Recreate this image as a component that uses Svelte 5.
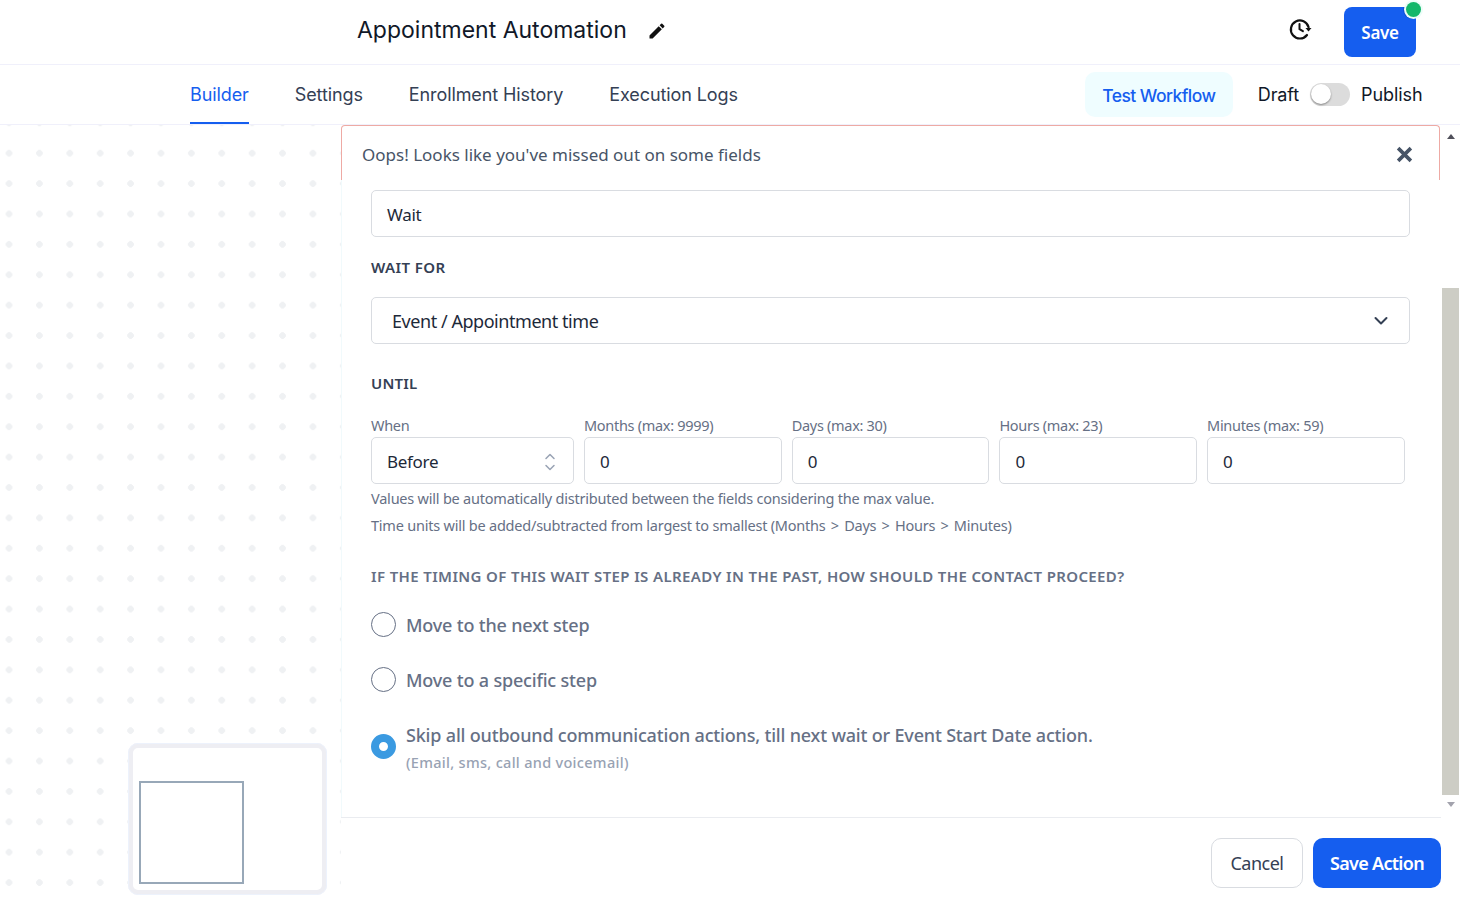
<script lang="ts">
	const units = [
		{ label: 'Months (max: 9999)', value: '0' },
		{ label: 'Days (max: 30)', value: '0' },
		{ label: 'Hours (max: 23)', value: '0' },
		{ label: 'Minutes (max: 59)', value: '0' }
	];
	const tabs = ['Builder', 'Settings', 'Enrollment History', 'Execution Logs'];
</script>

<div class="page">
	<header class="top">
		<h1 class="title">Appointment Automation</h1>
		<svg class="pencil" viewBox="0 0 24 24" width="20" height="20" aria-hidden="true">
			<path fill="#111" d="M3 17.25V21h3.75L17.81 9.94l-3.75-3.75L3 17.25zM20.71 7.04a1 1 0 0 0 0-1.41l-2.34-2.34a1 1 0 0 0-1.41 0l-1.83 1.83 3.75 3.75 1.83-1.83z" />
		</svg>
		<svg class="history" viewBox="0 0 24 24" width="24" height="24" aria-hidden="true">
			<path fill="none" stroke="#111" stroke-width="2.2" stroke-linecap="round" d="M20.6 10.2A9 9 0 1 0 19 18" />
			<path fill="none" stroke="#111" stroke-width="2" stroke-linecap="round" stroke-linejoin="round" d="M11.5 7v5.2l3.4 2" />
			<path fill="#111" d="M17.5 11h6l-3 3.6z" />
		</svg>
		<div class="save-wrap">
			<button class="btn-primary save">Save</button>
			<span class="ping"></span>
			<span class="dot"></span>
		</div>
	</header>

	<nav class="tabs">
		{#each tabs as tab, i}
			<span class="tab" class:active={i === 0}>{tab}</span>
		{/each}
		<button class="test">Test Workflow</button>
		<span class="state draft">Draft</span>
		<span class="toggle"><span class="knob"></span></span>
		<span class="state">Publish</span>
	</nav>

	<main class="work">
		<section class="canvas">
			<div class="minimap"><div class="viewport"></div></div>
		</section>

		<section class="panel">
			<div class="alert">
				<span>Oops! Looks like you've missed out on some fields</span>
				<svg viewBox="0 0 16 16" width="17" height="17" aria-hidden="true">
					<path stroke="#475467" stroke-width="3.4" d="M2 2l12 12M14 2L2 14" />
				</svg>
			</div>

			<div class="body">
				<div class="field name">Wait</div>
				<div class="heading wait-for">WAIT FOR</div>
				<div class="field select">
					<span>Event / Appointment time</span>
					<svg viewBox="0 0 14 14" width="14" height="14" aria-hidden="true">
						<path fill="none" stroke="#344054" stroke-width="2" stroke-linecap="round" stroke-linejoin="round" d="M1.5 4l5.5 5.5L12.500 4" />
					</svg>
				</div>
				<div class="heading until">UNTIL</div>

				<div class="grid">
					<div class="cell">
						<span class="cell-label">When</span>
						<div class="field small before">
							<span>Before</span>
							<svg viewBox="0 0 12 22" width="12" height="22" aria-hidden="true">
								<path fill="none" stroke="#98a2b3" stroke-width="1.5" stroke-linecap="round" stroke-linejoin="round" d="M2 7.500L6 3.500l4 4M2 14.500l4 4 4-4" />
							</svg>
						</div>
					</div>
					{#each units as unit}
						<div class="cell">
							<span class="cell-label">{unit.label}</span>
							<div class="field small">{unit.value}</div>
						</div>
					{/each}
				</div>

				<p class="help first">Values will be automatically distributed between the fields considering the max value.</p>
				<p class="help second">Time units will be added/subtracted from largest to smallest (Months <span class="sep">&gt;</span> Days <span class="sep">&gt;</span> Hours <span class="sep">&gt;</span> Minutes)</p>

				<div class="question">IF THE TIMING OF THIS WAIT STEP IS ALREADY IN THE PAST, HOW SHOULD THE CONTACT PROCEED?</div>

				<div class="option one">
					<span class="radio"></span>
					<span class="option-text">Move to the next step</span>
				</div>
				<div class="option two">
					<span class="radio"></span>
					<span class="option-text">Move to a specific step</span>
				</div>
				<div class="option three">
					<span class="radio checked"></span>
					<div>
						<div class="option-text">Skip all outbound communication actions, till next wait or Event Start Date action.</div>
						<div class="option-sub">(Email, sms, call and voicemail)</div>
					</div>
				</div>
			</div>

			<footer class="foot">
				<button class="cancel">Cancel</button>
				<button class="btn-primary save-action">Save Action</button>
			</footer>
		</section>

		<div class="scrollbar">
			<span class="arrow up"></span>
			<span class="thumb"></span>
			<span class="arrow down"></span>
		</div>
	</main>
</div>

<style>
	:global(body) {
		margin: 0;
		background: #fff;
	}

	.page {
		width: 1460px;
		height: 906px;
		display: flex;
		flex-direction: column;
		overflow: hidden;
		font-family: 'Noto Sans', 'Open Sans', sans-serif;
		color: #344054;
	}

	button {
		font-family: inherit;
		cursor: pointer;
		border: none;
	}

	.top {
		height: 64px;
		flex-shrink: 0;
		display: flex;
		align-items: center;
		padding-left: 357px;
		border-bottom: 1px solid #f0f0fb;
	}

	.title {
		margin: 0 0 4px;
		font-family: Inter, sans-serif;
		font-size: 23px;
		font-weight: 400;
		color: #101828;
	}

	.pencil {
		margin: 0 0 3px 20px;
	}

	.history {
		margin: 0 0 6px auto;
	}

	.save-wrap {
		position: relative;
		margin: 0 44px 0 32px;
	}

	.btn-primary {
		background: #155eef;
		color: #fff;
		font-weight: 600;
		letter-spacing: -0.3px;
	}

	.save {
		display: block;
		width: 72px;
		height: 50px;
		padding-top: 2px;
		border-radius: 8px;
		font-size: 17px;
		position: relative;
	}

	.ping {
		position: absolute;
		right: -5px;
		top: -6px;
		width: 18px;
		height: 18px;
		border-radius: 50%;
		background: #0f4fd6;
		clip-path: inset(6px 5px 0 0);
	}

	.dot {
		position: absolute;
		right: -5px;
		top: -5px;
		width: 15px;
		height: 15px;
		border-radius: 50%;
		background: #12b76a;
		box-shadow: 0 0 0 2px #ecfdf8;
	}

	.tabs {
		height: 59px;
		flex-shrink: 0;
		display: flex;
		align-items: center;
		padding-left: 190px;
		gap: 46px;
		border-bottom: 1px solid #f0f0fb;
		font-family: Inter, sans-serif;
		font-size: 18px;
		letter-spacing: -0.1px;
		color: #344054;
	}

	.tab {
		height: 59px;
		line-height: 59px;
		box-sizing: border-box;
	}

	.tab.active {
		color: #155eef;
		border-bottom: 2px solid #155eef;
	}

	.test {
		margin-left: 301px;
		width: 148px;
		height: 45px;
		padding-top: 3px;
		border-radius: 10px;
		background: #effdff;
		color: #155eef;
		font-size: 17.5px;
		font-weight: 500;
		letter-spacing: -0.55px;
	}

	.state {
		color: #101828;
		margin-left: -35px;
	}

	.draft {
		margin-left: -21px;
	}

	.toggle {
		width: 40px;
		height: 23px;
		margin-left: -35px;
		margin-top: -1px;
		border-radius: 12px;
		background: #dcdcdc;
		display: flex;
		align-items: center;
		padding-left: 1px;
		box-sizing: border-box;
	}

	.knob {
		width: 20px;
		height: 20px;
		border-radius: 50%;
		background: #fff;
		box-shadow: 0 1px 2px rgba(0, 0, 0, 0.4);
	}

	.work {
		flex: 1;
		display: flex;
		min-height: 0;
	}

	.canvas {
		width: 341px;
		flex-shrink: 0;
		position: relative;
		background-image: radial-gradient(circle, #eff1f3 3px, transparent 3.5px);
		background-size: 30.4px 30.4px;
		background-position: -6.2px 13px;
	}

	.minimap {
		position: absolute;
		left: 128px;
		top: 618px;
		width: 199px;
		height: 152px;
		box-sizing: border-box;
		border: 5px solid #eeeef3;
		border-radius: 10px;
		outline: 1px solid #edf2fc;
		outline-offset: -1px;
		background: #fff;
	}

	.viewport {
		position: absolute;
		left: 6px;
		top: 33px;
		width: 105px;
		height: 103px;
		box-sizing: border-box;
		border: 2px solid #98a8b8;
	}

	.panel {
		width: 1100px;
		flex-shrink: 0;
		display: flex;
		flex-direction: column;
		background: #fff;
	}

	.alert {
		height: 55px;
		flex-shrink: 0;
		box-sizing: border-box;
		margin-right: 1px;
		padding: 3px 26px 0 20px;
		display: flex;
		align-items: center;
		justify-content: space-between;
		border: 1px solid #eeaaa4;
		border-bottom: none;
		border-radius: 4px 4px 0 0;
		font-size: 17px;
		color: #475467;
	}

	.body {
		flex: 1;
		padding: 10px 30px 0 29px;
		border-left: 1px solid #f1fafc;
	}

	.field {
		box-sizing: border-box;
		height: 47px;
		padding-top: 2px;
		display: flex;
		align-items: center;
		border: 1px solid #d9dce1;
		border-radius: 5px;
		background: #fff;
		font-size: 17px;
		color: #1d2939;
		letter-spacing: -0.3px;
	}

	.name {
		width: 1039px;
		padding-left: 15px;
	}

	.heading {
		font-size: 15px;
		font-weight: 600;
		color: #344054;
	}

	.wait-for {
		margin-top: 20px;
		margin-bottom: 19px;
		line-height: 21px;
		letter-spacing: 0.4px;
	}

	.select {
		width: 1039px;
		justify-content: space-between;
		padding: 0 21px 0 20px;
		font-size: 18px;
		letter-spacing: -0.45px;
	}

	.until {
		margin-top: 29px;
		line-height: 21px;
		letter-spacing: 0.2px;
	}

	.grid {
		display: grid;
		grid-template-columns: 203px repeat(4, 197.7px);
		gap: 10px;
		width: 1034px;
		margin-top: 20px;
	}

	.cell {
		display: flex;
		flex-direction: column;
	}

	.cell-label {
		height: 23px;
		line-height: 22px;
		font-size: 14.5px;
		letter-spacing: -0.3px;
		color: #667085;
	}

	.small {
		padding-left: 15px;
	}

	.before {
		justify-content: space-between;
		padding-right: 17px;
	}

	.help {
		margin: 0;
		font-size: 14.5px;
		letter-spacing: -0.22px;
		line-height: 20px;
		color: #667085;
	}

	.help.first {
		margin-top: 4px;
	}

	.help.second {
		margin-top: 7px;
	}

	.sep {
		margin: 0 1.7px;
	}

	.question {
		margin-top: 31px;
		font-size: 15px;
		line-height: 20px;
		font-weight: 600;
		letter-spacing: 0.37px;
		color: #667085;
	}

	.option {
		display: flex;
		align-items: center;
		gap: 10px;
	}

	.one {
		margin-top: 26px;
		height: 25px;
	}

	.two {
		margin-top: 30px;
		height: 25px;
	}

	.three {
		margin-top: 29px;
	}

	.radio {
		width: 25px;
		height: 25px;
		box-sizing: border-box;
		flex-shrink: 0;
		border: 1px solid #667085;
		border-radius: 50%;
	}

	.radio.checked {
		border: 8px solid #3b9ae1;
	}

	.option-text {
		padding-top: 2px;
		font-size: 18px;
		line-height: 25px;
		color: #667085;
		font-weight: 500;
		letter-spacing: -0.18px;
	}

	.option-sub {
		margin-top: 4px;
		font-size: 14.5px;
		line-height: 20px;
		font-weight: 500;
		letter-spacing: 0.3px;
		color: #98a2b3;
	}

	.foot {
		height: 89px;
		flex-shrink: 0;
		box-sizing: border-box;
		display: flex;
		justify-content: flex-end;
		gap: 10px;
		padding-top: 20px;
		border-top: 1px solid #eaecf0;
	}

	.foot button {
		height: 50px;
		font-size: 18px;
	}

	.cancel {
		width: 92px;
		background: #fff;
		border: 1px solid #d9dce1;
		border-radius: 10px;
		color: #344054;
		letter-spacing: -0.5px;
	}

	.save-action {
		width: 128px;
		border-radius: 10px;
		letter-spacing: -0.7px;
	}

	.scrollbar {
		width: 19px;
		display: flex;
		flex-direction: column;
		align-items: center;
	}

	.arrow {
		width: 0;
		height: 0;
		border-left: 4.5px solid transparent;
		border-right: 4.5px solid transparent;
	}

	.up {
		margin-top: 9px;
		border-bottom: 5px solid #50505a;
	}

	.thumb {
		width: 17px;
		height: 507px;
		margin-top: 149px;
		background: #cdcdc5;
	}

	.down {
		margin-top: 7px;
		border-top: 5px solid #a3a3ad;
	}
</style>
